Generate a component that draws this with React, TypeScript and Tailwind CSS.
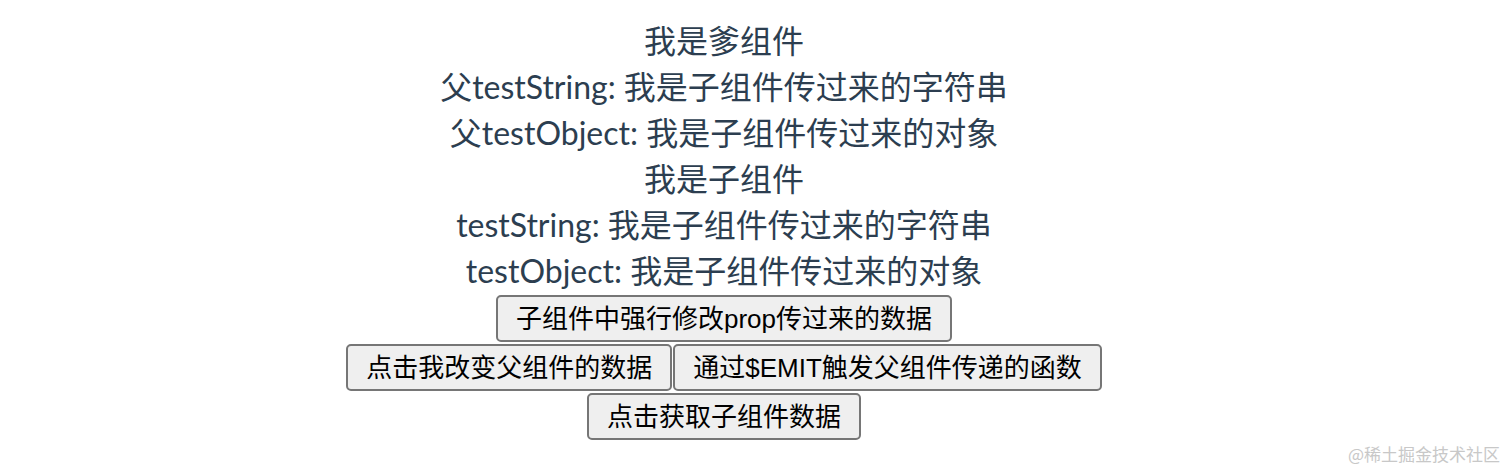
const textFont = "font-['Lato','Noto_Sans_CJK_SC',sans-serif]";
const btnFont = "font-['Liberation_Sans','Noto_Sans_CJK_SC',sans-serif]";

function Btn({ children }: { children: React.ReactNode }) {
  return (
    <button
      className={`${btnFont} h-[47px] px-[18px] text-[26px] leading-none text-black bg-[#efefef] border-2 border-[#767676] rounded-[5px]`}
    >
      {children}
    </button>
  );
}

export default function App() {
  return (
    <div className="w-[1510px] h-[472px] bg-white relative">
      <div className="w-[1448px]">
        <div className={`${textFont} pt-[18px] flex flex-col items-center text-[32px] leading-[46px] text-[#2c3e50]`}>
          <div>我是爹组件</div>
          <div>父testString: 我是子组件传过来的字符串</div>
          <div>父testObject: 我是子组件传过来的对象</div>
          <div>我是子组件</div>
          <div>testString: 我是子组件传过来的字符串</div>
          <div>testObject: 我是子组件传过来的对象</div>
        </div>
        <div className="flex flex-col items-center gap-[2px] mt-[1px]">
          <Btn>子组件中强行修改prop传过来的数据</Btn>
          <div className="flex gap-[1px]">
            <Btn>点击我改变父组件的数据</Btn>
            <Btn>通过$EMIT触发父组件传递的函数</Btn>
          </div>
          <Btn>点击获取子组件数据</Btn>
        </div>
      </div>
      <div className="absolute right-[10px] bottom-[6px] text-[17px] text-[#c8c8c8] font-['Noto_Sans_CJK_SC',sans-serif]">
        @稀土掘金技术社区
      </div>
    </div>
  );
}
